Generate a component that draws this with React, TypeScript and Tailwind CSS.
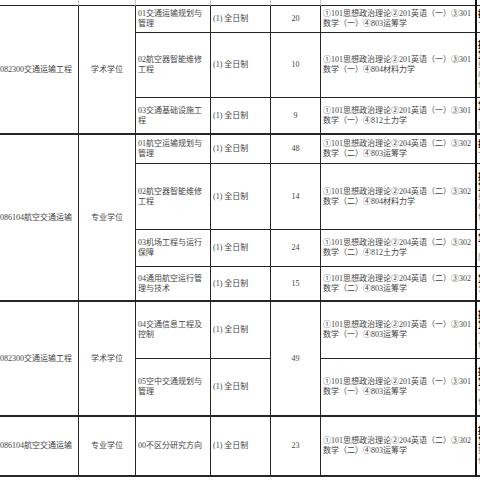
import React from "react";

const rowStarts = [
  "row-start-2",
  "row-start-3",
  "row-start-4",
  "row-start-5",
  "row-start-6",
  "row-start-7",
  "row-start-8",
  "row-start-9",
  "row-start-10",
  "row-start-11",
];
const thick = [false, false, true, false, false, false, true, false, true, true];

const col3 = [
  ["01交通运输规划与", "管理"],
  ["02航空器智能维修", "工程"],
  ["03交通基础设施工", "程"],
  ["01航空运输规划与", "管理"],
  ["02航空器智能维修", "工程"],
  ["03机场工程与运行", "保障"],
  ["04通用航空运行管", "理与技术"],
  ["04交通信息工程及", "控制"],
  ["05空中交通规划与", "管理"],
  ["00不区分研究方向"],
];

const col5: (string | null)[] = ["20", "10", "9", "48", "14", "24", "15", "49", null, "23"];

const L1a = "①101思想政治理论②201英语（一）③301";
const L1b = "①101思想政治理论②204英语（二）③302";
const col6 = [
  [L1a, "数学（一）④803运筹学"],
  [L1a, "数学（一）④804材料力学"],
  [L1a, "数学（一）④812土力学"],
  [L1b, "数学（二）④803运筹学"],
  [L1b, "数学（二）④804材料力学"],
  [L1b, "数学（二）④812土力学"],
  [L1b, "数学（二）④803运筹学"],
  [L1a, "数学（一）④803运筹学"],
  [L1a, "数学（一）④803运筹学"],
  [L1b, "数学（二）④803运筹学"],
];

const col7: { b: string[]; g: string[] }[] = [
  { b: ["推荐免试"], g: ["一般"] },
  { b: ["接收推免", "复试科目"], g: ["经济学", "&材料", "任选"] },
  { b: ["复试科目"], g: ["（同等", "同上"] },
  { b: ["推荐免试"], g: ["一般"] },
  { b: ["接收推免", "复试科目"], g: ["经济学", "&材料", "任选"] },
  { b: ["复试科目"], g: ["（同等", "同上"] },
  { b: ["复试科目"], g: ["分方向"] },
  { b: ["接收推免", "复试科目"], g: ["“数据", "任选"] },
  { b: ["接收推免", "复试科目"], g: ["“数据", "任选"] },
  { b: ["接收推免", "复试科目"], g: ["数据", "任选"] },
];

const line = "border-[#262626]";

export default function App() {
  return (
    <div className="w-[480px] h-[480px] overflow-hidden bg-white font-['Liberation_Serif','Noto_Sans_CJK_SC',serif] text-[8px] leading-[10px] text-[#444]">
      <div className="grid w-[560px] grid-cols-[79px_57px_75px_60px_50px_156px_83px] grid-rows-[6px_27px_65px_37px_29px_66px_37px_35px_57px_58px_60px]">
        {/* strip of the row above */}
        <div className={`col-start-1 row-start-1 border-r border-r-[#c8c8c8] border-b ${line}`} />
        <div className={`col-start-2 row-start-1 border-r border-r-[#c8c8c8] border-b ${line}`} />
        <div className={`col-start-3 row-start-1 border-r border-r-[#c8c8c8] border-b ${line}`} />
        <div className={`col-start-4 row-start-1 border-r border-r-[#c8c8c8] border-b ${line}`} />
        <div className={`col-start-5 row-start-1 border-r border-r-[#c8c8c8] border-b ${line}`} />
        <div className={`col-start-6 row-start-1 border-r-2 border-r-[#111] border-b ${line}`} />
        <div className={`col-start-7 row-start-1 border-b ${line}`} />

        {/* column 1 */}
        <div className={`col-start-1 row-start-2 row-span-3 flex items-center border-r border-b-2 ${line} whitespace-nowrap`}>
          082300交通运输工程
        </div>
        <div className={`col-start-1 row-start-5 row-span-4 flex items-center border-r border-b-2 ${line} whitespace-nowrap`}>
          086104航空交通运输
        </div>
        <div className={`col-start-1 row-start-9 row-span-2 flex items-center border-r border-b-2 ${line} whitespace-nowrap`}>
          082300交通运输工程
        </div>
        <div className={`col-start-1 row-start-11 flex items-center border-r border-b-2 ${line} whitespace-nowrap`}>
          086104航空交通运输
        </div>

        {/* column 2 */}
        <div className={`col-start-2 row-start-2 row-span-3 flex items-center justify-center border-r border-b-2 ${line}`}>
          学术学位
        </div>
        <div className={`col-start-2 row-start-5 row-span-4 flex items-center justify-center border-r border-b-2 ${line}`}>
          专业学位
        </div>
        <div className={`col-start-2 row-start-9 row-span-2 flex items-center justify-center border-r border-b-2 ${line}`}>
          学术学位
        </div>
        <div className={`col-start-2 row-start-11 flex items-center justify-center border-r border-b-2 ${line}`}>
          专业学位
        </div>

        {rowStarts.map((rs, i) => {
          const bb = thick[i] ? "border-b-2" : "border-b";
          return (
            <React.Fragment key={i}>
              <div className={`col-start-3 ${rs} flex flex-col justify-center pl-[2px] border-r ${bb} ${line} whitespace-nowrap`}>
                {col3[i].map((t, k) => (
                  <div key={k}>{t}</div>
                ))}
              </div>
              <div className={`col-start-4 ${rs} flex items-center pl-[2px] border-r ${bb} ${line} whitespace-nowrap`}>
                (1) 全日制
              </div>
              {col5[i] !== null && (
                <div
                  className={`col-start-5 ${rs} ${i === 7 ? "row-span-2 border-b-2" : bb} flex items-center justify-center border-r ${line}`}
                >
                  {col5[i]}
                </div>
              )}
              <div className={`col-start-6 ${rs} flex flex-col justify-center pl-[2px] border-r-2 border-r-[#111] ${bb} ${line} whitespace-nowrap`}>
                {col6[i].map((t, k) => (
                  <div key={k}>{t}</div>
                ))}
              </div>
              <div className={`col-start-7 ${rs} flex flex-col justify-center pl-[1px] ${bb} ${line} whitespace-nowrap`}>
                {col7[i].b.map((t, k) => (
                  <div key={"b" + k} className="font-bold text-[9px] leading-[10px] text-black font-['Noto_Sans_CJK_SC',sans-serif]">
                    {t}
                  </div>
                ))}
                {col7[i].g.map((t, k) => (
                  <div key={"g" + k} className="text-[#777] leading-[10px]">
                    {t}
                  </div>
                ))}
              </div>
            </React.Fragment>
          );
        })}
      </div>
    </div>
  );
}
